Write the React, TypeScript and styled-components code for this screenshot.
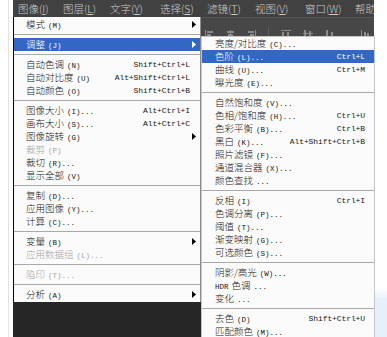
import styled, { createGlobalStyle } from 'styled-components';

const GlobalStyle = createGlobalStyle`
  html, body { margin: 0; padding: 0; }
  body {
    width: 387px;
    height: 337px;
    overflow: hidden;
    background: #ffffff;
    font-family: "Noto Sans CJK SC", "Noto Sans", sans-serif;
  }
`;

const Screen = styled.div`
  position: relative;
  width: 387px;
  height: 337px;
  overflow: hidden;
  display: flex;
`;

const DeskLeft = styled.div`
  width: 13px;
  flex: none;
  background: linear-gradient(to right, #ffffff 0 8px, #e2e2e2 8px 9px, #ffffff 9px);
`;

const DeskRight = styled.div`
  flex: 1;
  background: linear-gradient(to bottom, #ffffff 0 288px, #e6effa 300px);
`;

const PsWindow = styled.div`
  width: 361px;
  flex: none;
  display: flex;
  flex-direction: column;
  background: #272727;
`;

const MenuBar = styled.div`
  height: 17px;
  display: flex;
  align-items: center;
  padding-left: 5px;
  background: #414141;
  color: #cdcdcd;
  font-size: 10.5px;
  font-weight: 300;
`;

const BarItem = styled.span<{ $w: number }>`
  width: ${(p) => p.$w}px;
  flex: none;
  white-space: nowrap;
  u { text-decoration: underline; text-underline-offset: 1px; }
`;

const OptionsBar = styled.div`
  height: 19px;
  border-top: 1px solid #565656;
  background: #474747;
  display: flex;
  align-items: flex-end;
  padding: 0 0 1px 192px;
  gap: 12px;
`;

const ToolIcon = styled.svg`
  flex: none;
  display: block;
`;

const Workspace = styled.div`
  flex: 1;
  background: #262626;
`;

const Menu = styled.div<{ $left: number; $top: number; $width: number }>`
  position: absolute;
  left: ${(p) => p.$left}px;
  top: ${(p) => p.$top}px;
  width: ${(p) => p.$width}px;
  box-sizing: border-box;
  background: #fbfbfb;
  display: flex;
  flex-direction: column;
`;

const MainMenu = styled(Menu)`
  border-left: 1px solid #000000;
  border-right: 1px solid #8c8c8c;
  padding: 1px 0 1px;
`;

const SubMenu = styled(Menu)`
  border: 1px solid #c6c6c6;
  border-bottom: none;
  height: 320px;
`;

const Row = styled.div<{ $active?: boolean; $disabled?: boolean; $padL: number; $padR: number }>`
  height: 13px;
  flex: none;
  display: flex;
  align-items: center;
  padding: 0 ${(p) => p.$padR}px 0 ${(p) => p.$padL}px;
  font-size: 9.5px;
  font-weight: 300;
  line-height: 12px;
  white-space: nowrap;
  background: ${(p) => (p.$active ? '#3168c5' : 'transparent')};
  color: ${(p) => (p.$active ? '#ffffff' : p.$disabled ? '#a4a4a4' : '#161616')};
`;

const Label = styled.span`
  flex: 1;
`;

const Mono = styled.span`
  font-family: "Liberation Mono", monospace;
  font-size: 7.5px;
  margin-left: 3px;
`;

const Shortcut = styled.span`
  font-family: "Liberation Mono", monospace;
  font-size: 8px;
  letter-spacing: -0.1px;
`;

const Arrow = styled.svg`
  display: block;
  margin-right: -6px;
`;

const Separator = styled.div`
  height: 7px;
  flex: none;
  display: flex;
  align-items: center;
  &::after {
    content: '';
    flex: 1;
    height: 1px;
    background: #a9a9a9;
  }
`;

type Item =
  | 'sep'
  | {
      label: string;
      key?: string;
      dots?: boolean;
      shortcut?: string;
      sub?: boolean;
      active?: boolean;
      disabled?: boolean;
    };

const mainItems: Item[] = [
  { label: '模式', key: 'M', sub: true },
  'sep',
  { label: '调整', key: 'J', sub: true, active: true },
  'sep',
  { label: '自动色调', key: 'N', shortcut: 'Shift+Ctrl+L' },
  { label: '自动对比度', key: 'U', shortcut: 'Alt+Shift+Ctrl+L' },
  { label: '自动颜色', key: 'O', shortcut: 'Shift+Ctrl+B' },
  'sep',
  { label: '图像大小', key: 'I', dots: true, shortcut: 'Alt+Ctrl+I' },
  { label: '画布大小', key: 'S', dots: true, shortcut: 'Alt+Ctrl+C' },
  { label: '图像旋转', key: 'G', sub: true },
  { label: '裁剪', key: 'P', disabled: true },
  { label: '裁切', key: 'R', dots: true },
  { label: '显示全部', key: 'V' },
  'sep',
  { label: '复制', key: 'D', dots: true },
  { label: '应用图像', key: 'Y', dots: true },
  { label: '计算', key: 'C', dots: true },
  'sep',
  { label: '变量', key: 'B', sub: true },
  { label: '应用数据组', key: 'L', dots: true, disabled: true },
  'sep',
  { label: '陷印', key: 'T', dots: true, disabled: true },
  'sep',
  { label: '分析', key: 'A', sub: true },
];

const adjustItems: Item[] = [
  { label: '亮度/对比度', key: 'C', dots: true },
  { label: '色阶', key: 'L', dots: true, shortcut: 'Ctrl+L', active: true },
  { label: '曲线', key: 'U', dots: true, shortcut: 'Ctrl+M' },
  { label: '曝光度', key: 'E', dots: true },
  'sep',
  { label: '自然饱和度', key: 'V', dots: true },
  { label: '色相/饱和度', key: 'H', dots: true, shortcut: 'Ctrl+U' },
  { label: '色彩平衡', key: 'B', dots: true, shortcut: 'Ctrl+B' },
  { label: '黑白', key: 'K', dots: true, shortcut: 'Alt+Shift+Ctrl+B' },
  { label: '照片滤镜', key: 'F', dots: true },
  { label: '通道混合器', key: 'X', dots: true },
  { label: '颜色查找', dots: true },
  'sep',
  { label: '反相', key: 'I', shortcut: 'Ctrl+I' },
  { label: '色调分离', key: 'P', dots: true },
  { label: '阈值', key: 'T', dots: true },
  { label: '渐变映射', key: 'G', dots: true },
  { label: '可选颜色', key: 'S', dots: true },
  'sep',
  { label: '阴影/高光', key: 'W', dots: true },
  { label: 'HDR 色调', dots: true },
  { label: '变化', dots: true },
  'sep',
  { label: '去色', key: 'D', shortcut: 'Shift+Ctrl+U' },
  { label: '匹配颜色', key: 'M', dots: true },
];

const barItems: [string, string, number][] = [
  ['图像', 'I', 45],
  ['图层', 'L', 47],
  ['文字', 'Y', 50],
  ['选择', 'S', 47],
  ['滤镜', 'T', 48],
  ['视图', 'V', 50],
  ['窗口', 'W', 50],
];

const SubArrow = ({ color }: { color: string }) => (
  <Arrow width="4" height="7" viewBox="0 0 4 7">
    <polygon points="0,0 4,3.5 0,7" fill={color} />
  </Arrow>
);

const renderLabel = (label: string) => {
  if (label.startsWith('HDR')) {
    return (
      <>
        <Mono style={{ marginLeft: 0, marginRight: 3 }}>HDR</Mono>
        {label.slice(4)}
      </>
    );
  }
  return label;
};

const MenuRows = ({ items, padL, padR }: { items: Item[]; padL: number; padR: number }) => (
  <>
    {items.map((it, i) => {
      if (it === 'sep') return <Separator key={i} />;
      return (
        <Row key={i} $active={it.active} $disabled={it.disabled} $padL={padL} $padR={padR}>
          <Label>
            {renderLabel(it.label)}
            {(it.key || it.dots) && (
              <Mono>
                {it.key ? `(${it.key})` : ''}
                {it.dots ? '...' : ''}
              </Mono>
            )}
          </Label>
          {it.shortcut && <Shortcut>{it.shortcut}</Shortcut>}
          {it.sub && <SubArrow color={it.active ? '#ffffff' : '#000000'} />}
        </Row>
      );
    })}
  </>
);

const AlignIcons = () => (
  <>
    <ToolIcon width="9" height="7" viewBox="0 0 9 7">
      <rect x="0" y="0" width="1" height="7" fill="#8a8a8a" />
      <rect x="2" y="1" width="6" height="2" fill="#8a8a8a" />
      <rect x="2" y="4" width="4" height="2" fill="#8a8a8a" />
    </ToolIcon>
    <ToolIcon width="9" height="7" viewBox="0 0 9 7">
      <rect x="4" y="0" width="1" height="7" fill="#8a8a8a" />
      <rect x="1" y="1" width="7" height="2" fill="#8a8a8a" />
      <rect x="2" y="4" width="5" height="2" fill="#8a8a8a" />
    </ToolIcon>
    <ToolIcon width="9" height="7" viewBox="0 0 9 7">
      <rect x="8" y="0" width="1" height="7" fill="#8a8a8a" />
      <rect x="1" y="1" width="6" height="2" fill="#8a8a8a" />
      <rect x="3" y="4" width="4" height="2" fill="#8a8a8a" />
    </ToolIcon>
    <ToolIcon width="1" height="10" viewBox="0 0 1 10">
      <rect x="0" y="0" width="1" height="10" fill="#5e5e5e" />
    </ToolIcon>
    <ToolIcon width="10" height="7" viewBox="0 0 10 7">
      <rect x="0" y="0" width="10" height="1" fill="#8a8a8a" />
      <rect x="1" y="2" width="2" height="5" fill="#8a8a8a" />
      <rect x="6" y="2" width="2" height="4" fill="#8a8a8a" />
    </ToolIcon>
    <ToolIcon width="10" height="7" viewBox="0 0 10 7">
      <rect x="0" y="3" width="10" height="1" fill="#8a8a8a" />
      <rect x="1" y="0" width="2" height="7" fill="#8a8a8a" />
      <rect x="6" y="1" width="2" height="5" fill="#8a8a8a" />
    </ToolIcon>
    <ToolIcon width="10" height="7" viewBox="0 0 10 7">
      <rect x="0" y="6" width="10" height="1" fill="#8a8a8a" />
      <rect x="1" y="0" width="2" height="6" fill="#8a8a8a" />
      <rect x="6" y="2" width="2" height="4" fill="#8a8a8a" />
    </ToolIcon>
    <ToolIcon width="9" height="7" viewBox="0 0 9 7" style={{ marginLeft: 14 }}>
      <rect x="0" y="0" width="1" height="7" fill="#8a8a8a" />
      <rect x="3" y="2" width="2" height="5" fill="#8a8a8a" />
      <rect x="6" y="3" width="2" height="4" fill="#8a8a8a" />
    </ToolIcon>
  </>
);

export default function App() {
  return (
    <>
      <GlobalStyle />
      <Screen>
        <DeskLeft />
        <PsWindow>
          <MenuBar>
            {barItems.map(([name, key, w]) => (
              <BarItem key={key} $w={w}>
                {name}(<u>{key}</u>)
              </BarItem>
            ))}
            <BarItem $w={30}>帮助</BarItem>
          </MenuBar>
          <OptionsBar>
            <AlignIcons />
          </OptionsBar>
          <Workspace />
        </PsWindow>
        <DeskRight />

        <MainMenu $left={13} $top={17} $width={188}>
          <MenuRows items={mainItems} padL={12} padR={10} />
        </MainMenu>
        <SubMenu $left={201} $top={36} $width={174}>
          <MenuRows items={adjustItems} padL={13} padR={9} />
        </SubMenu>
      </Screen>
    </>
  );
}
